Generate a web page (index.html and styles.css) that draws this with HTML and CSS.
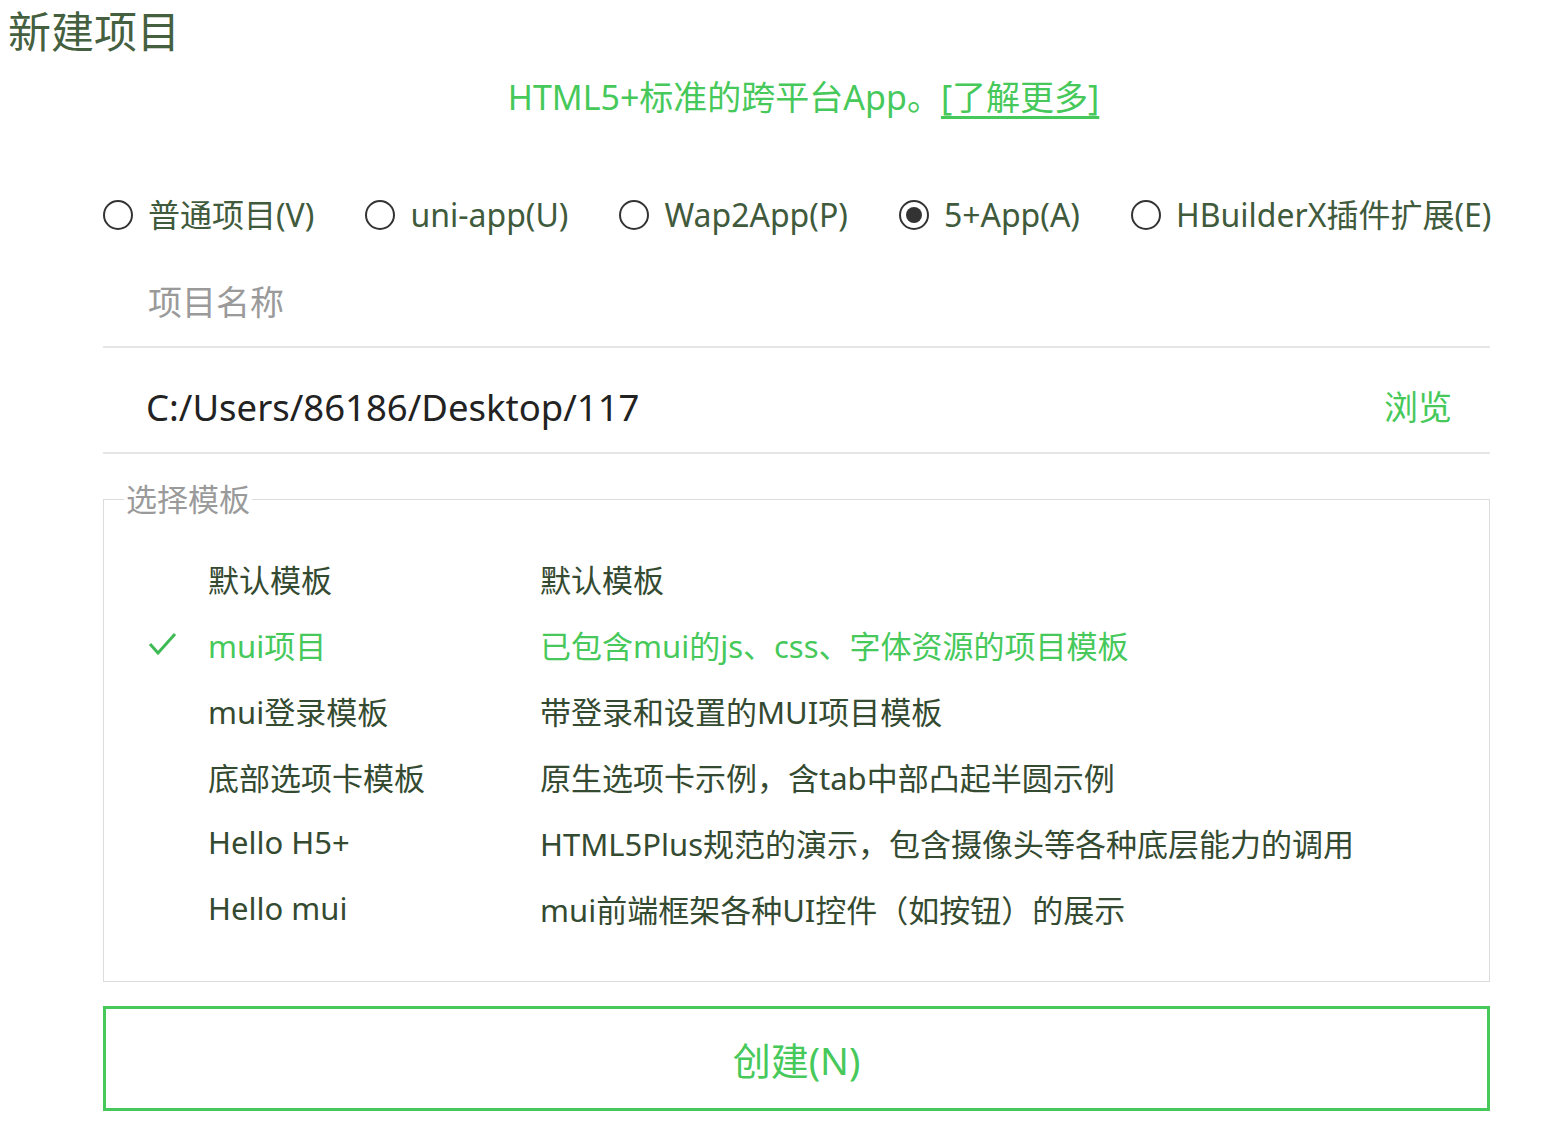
FILE: index.html
```html
<!DOCTYPE html>
<html lang="zh-CN">
<head>
<meta charset="utf-8">
<title>新建项目</title>
<link rel="stylesheet" href="styles.css">
</head>
<body>
<h1 class="title">新建项目</h1>
<main class="main">
  <p class="intro">HTML5+标准的跨平台App。<a class="more" href="#">[了解更多]</a></p>

  <div class="types">
    <label class="type"><span class="radio"></span><span>普通项目(V)</span></label>
    <label class="type"><span class="radio"></span><span>uni-app(U)</span></label>
    <label class="type"><span class="radio"></span><span>Wap2App(P)</span></label>
    <label class="type"><span class="radio checked"></span><span>5+App(A)</span></label>
    <label class="type"><span class="radio"></span><span>HBuilderX插件扩展(E)</span></label>
  </div>

  <div class="field name-field"><span class="placeholder">项目名称</span></div>
  <div class="field path-field"><span class="path">C:/Users/86186/Desktop/117</span><span class="browse">浏览</span></div>

  <fieldset class="templates">
    <legend class="legend">选择模板</legend>
    <div class="tpl-list">
      <div class="tpl"><span class="check"></span><span class="tpl-name">默认模板</span><span class="tpl-desc">默认模板</span></div>
      <div class="tpl selected"><span class="check"><svg width="30" height="26" viewBox="0 0 30 26"><polyline points="2,13 10,22 27,3" fill="none" stroke="#3fbb55" stroke-width="3"/></svg></span><span class="tpl-name">mui项目</span><span class="tpl-desc">已包含mui的js、css、字体资源的项目模板</span></div>
      <div class="tpl"><span class="check"></span><span class="tpl-name">mui登录模板</span><span class="tpl-desc">带登录和设置的MUI项目模板</span></div>
      <div class="tpl"><span class="check"></span><span class="tpl-name">底部选项卡模板</span><span class="tpl-desc">原生选项卡示例，含tab中部凸起半圆示例</span></div>
      <div class="tpl"><span class="check"></span><span class="tpl-name">Hello H5+</span><span class="tpl-desc">HTML5Plus规范的演示，包含摄像头等各种底层能力的调用</span></div>
      <div class="tpl"><span class="check"></span><span class="tpl-name">Hello mui</span><span class="tpl-desc">mui前端框架各种UI控件（如按钮）的展示</span></div>
    </div>
  </fieldset>

  <button class="create">创建(N)</button>
</main>
</body>
</html>
```

FILE: styles.css
```css
html, body {
  margin: 0;
  padding: 0;
  background: #fff;
}
body {
  font-family: "Noto Sans", "Noto Sans CJK SC", sans-serif;
  color: #405a3c;
}
.title {
  margin: 0;
  padding-left: 8px;
  font-size: 43px;
  font-weight: normal;
  line-height: 64px;
  color: #44603f;
}
.main {
  padding: 0 76px 0 103px;
}
.intro {
  margin: 8px 0 0;
  padding-left: 14px;
  text-align: center;
  font-size: 34px;
  line-height: 50px;
  color: #46c95a;
}
.more {
  color: #46c95a;
  text-decoration: underline;
  text-underline-offset: 6px;
}
.types {
  margin-top: 68px;
  display: flex;
  gap: 51px;
  height: 50px;
  align-items: center;
}
.type {
  display: flex;
  align-items: center;
  gap: 15px;
  font-size: 32px;
  line-height: 50px;
  color: #405a3c;
  white-space: nowrap;
}
.radio {
  width: 30px;
  height: 30px;
  box-sizing: border-box;
  border: 2.5px solid #333;
  border-radius: 50%;
  display: flex;
  align-items: center;
  justify-content: center;
  flex: none;
}
.radio.checked::after {
  content: "";
  width: 16px;
  height: 16px;
  border-radius: 50%;
  background: #333;
}
.field {
  display: flex;
  align-items: flex-end;
  border-bottom: 2px solid #e6e6e6;
  line-height: 50px;
}
.name-field {
  height: 103px;
  box-sizing: border-box;
  padding: 0 0 19px 45px;
  margin-top: 5px;
}
.placeholder {
  font-size: 34px;
  color: #9a9a9a;
}
.path-field {
  height: 106px;
  box-sizing: border-box;
  padding: 0 38px 20px 43px;
  justify-content: space-between;
}
.path {
  font-size: 36.5px;
  color: #222;
}
.browse {
  font-size: 34px;
  color: #46c95a;
}
.templates {
  margin: 28px 0 0;
  padding: 29px 0 40px 0;
  border: 1px solid #dcdcdc;
  min-width: 0;
}
.legend {
  margin-left: 20px;
  padding: 0 2px;
  font-size: 31px;
  line-height: 34px;
  color: #9a9a9a;
}
.tpl-list {
  display: flex;
  flex-direction: column;
  padding-left: 44px;
}
.tpl {
  display: grid;
  grid-template-columns: 60px 332px 1fr;
  align-items: center;
  height: 66px;
  font-size: 31px;
  color: #344a31;
}
.check {
  display: flex;
  align-items: center;
}
.tpl.selected .tpl-name,
.tpl.selected .tpl-desc {
  color: #46c95a;
}
.create {
  display: block;
  width: 100%;
  margin-top: 24px;
  height: 105px;
  box-sizing: border-box;
  border: 3px solid #46c95a;
  background: #fff;
  color: #46c95a;
  font-family: "Noto Sans", "Noto Sans CJK SC", sans-serif;
  font-size: 38px;
  cursor: pointer;
}
```
